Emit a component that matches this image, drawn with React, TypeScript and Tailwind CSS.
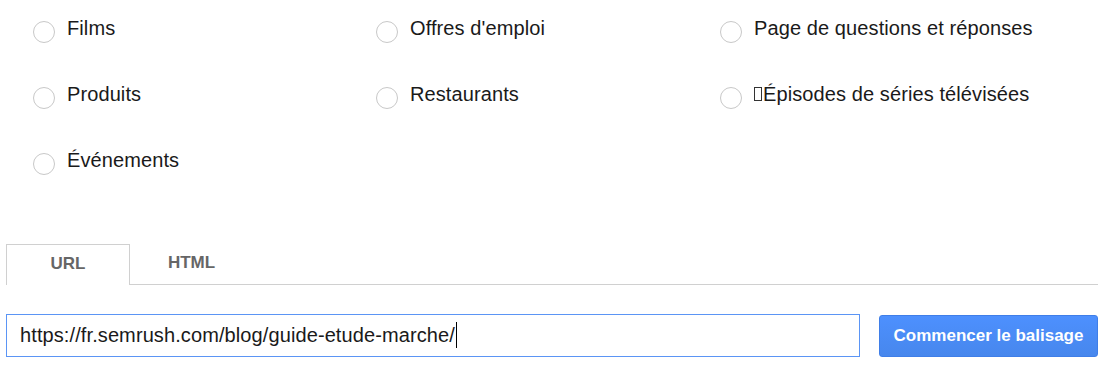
import { useState } from "react";

const options: string[][] = [
  ["Films", "Offres d'emploi", "Page de questions et réponses"],
  ["Produits", "Restaurants", "Épisodes de séries télévisées"],
  ["Événements"],
];

function Radio({ label, tofu }: { label: string; tofu?: boolean }) {
  return (
    <label className="flex items-start gap-3 h-[22px] cursor-pointer">
      <span className="w-[22px] h-[22px] rounded-full border border-[#c8c8c8] bg-white shrink-0" />
      <span className="-mt-[3px] text-[20px] tracking-[0.1px] leading-[20px] text-[#1a1a1a] flex items-center whitespace-nowrap">
        {tofu && <span className="inline-block w-[8px] h-[14px] border border-[#333] mr-[1px]" />}
        {label}
      </span>
    </label>
  );
}

export default function App() {
  const [tab, setTab] = useState<"url" | "html">("url");

  return (
    <div className="w-[1116px] h-[387px] bg-white font-['Liberation_Sans',Arial,sans-serif] overflow-hidden">
      {/* Schema types */}
      <div className="pl-[33px] pt-[21px] flex flex-col gap-[44px]">
        {options.map((row, i) => (
          <div key={i} className="grid grid-cols-[343px_344px_1fr] h-[22px]">
            {row.map((o) => (
              <Radio key={o} label={o} tofu={o.startsWith("Épisodes")} />
            ))}
          </div>
        ))}
      </div>

      {/* Tabs */}
      <div className="flex mt-[69px] pl-[6px] pr-[18px]">
        <button
          onClick={() => setTab("url")}
          className={`w-[124px] h-[41px] pb-[3px] text-[17px] font-bold text-[#666] ${tab === "url" ? "border border-b-0 border-[#d0d0d0] bg-white" : "border-b border-[#d0d0d0]"}`}
        >
          URL
        </button>
        <button
          onClick={() => setTab("html")}
          className={`w-[123px] h-[41px] pb-[3px] text-[17px] font-bold text-[#666] ${tab === "html" ? "border border-b-0 border-[#d0d0d0] bg-white" : "border-b border-[#d0d0d0]"}`}
        >
          HTML
        </button>
        <div className="flex-1 border-b border-[#d0d0d0]" />
      </div>

      {/* URL input + submit */}
      <div className="flex items-center gap-[19px] mt-[29px] pl-[6px]">
        <div className="w-[854px] h-[43px] border border-[#5b95f5] flex items-center pl-[13px] pb-[2px] text-[20px] tracking-[0.1px] text-[#1a1a1a]">
          https://fr.semrush.com/blog/guide-etude-marche/
          <span className="inline-block w-px h-[26px] bg-black ml-[1px]" />
        </div>
        <button className="w-[219px] h-[42px] rounded-[3px] border border-[#3f7ee8] bg-gradient-to-b from-[#4d90fe] to-[#4787ed] text-white font-bold text-[17px]">
          Commencer le balisage
        </button>
      </div>
    </div>
  );
}
